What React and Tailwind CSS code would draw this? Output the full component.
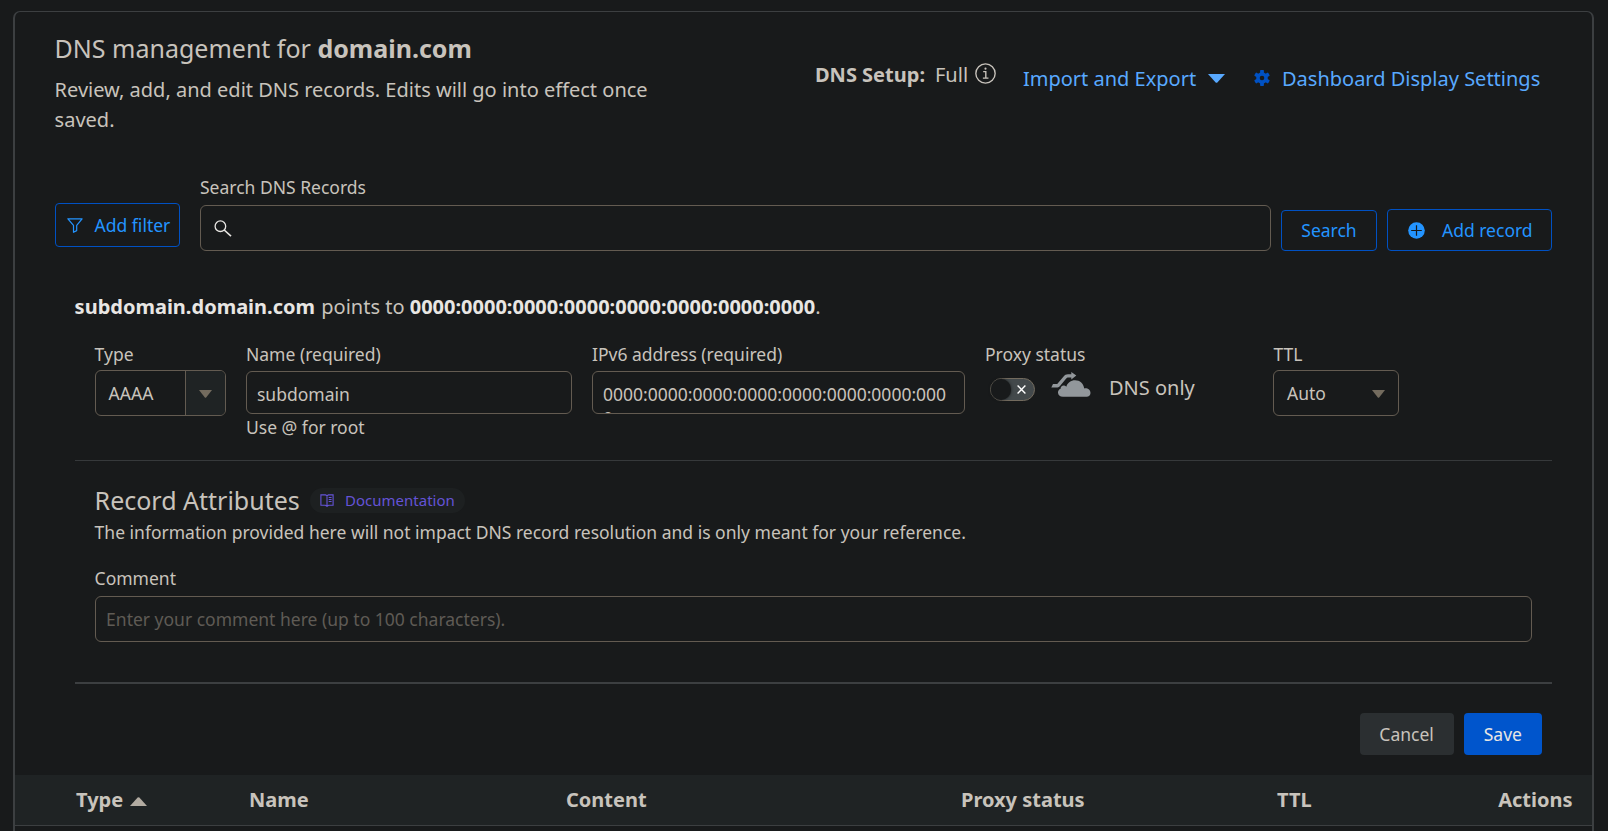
import React from "react";

const Triangle = ({ className, up }) => (
  <svg viewBox="0 0 16 9" preserveAspectRatio="none" className={className} fill="currentColor">
    <path d={up ? "M0 9L7.2 .6Q8 -.2 8.8 .6L16 9Z" : "M0 0H16L8.8 8.4Q8 9.2 7.2 8.4Z"} />
  </svg>
);

const InfoIcon = () => (
  <svg viewBox="0 0 20 20" className="h-[21px] w-[21px]" fill="none" stroke="currentColor" strokeWidth="1.3">
    <circle cx="10" cy="10" r="9.2" />
    <path d="M7.8 8.2H10.3V14.4M7.5 14.4H12.8" />
    <circle cx="10" cy="5.4" r="1" fill="currentColor" stroke="none" />
  </svg>
);

const GearIcon = () => (
  <svg viewBox="0 0 16 16" className="-mt-0.5 h-4 w-4">
    <g fill="#0051c3">
      <rect x="6.1" y="0" width="3.8" height="16" rx=".7" />
      <rect x="6.1" y="0" width="3.8" height="16" rx=".7" transform="rotate(60 8 8)" />
      <rect x="6.1" y="0" width="3.8" height="16" rx=".7" transform="rotate(120 8 8)" />
      <circle cx="8" cy="8" r="5.8" />
    </g>
    <circle cx="8" cy="8" r="2.3" fill="#181a1b" />
  </svg>
);

const FunnelIcon = () => (
  <svg viewBox="0 0 16 15" className="h-[15px] w-4" fill="none" stroke="currentColor" strokeWidth="1.2" strokeLinejoin="round">
    <path d="M.9 .8H15.1L9.7 7.4V12.6L6.5 14.3V7.4Z" />
  </svg>
);

const SearchIcon = () => (
  <svg viewBox="0 0 18 17" className="mt-px h-[17px] w-[18px]" fill="none" stroke="#e8e6e3" strokeWidth="1.3">
    <circle cx="6.4" cy="6.2" r="5.3" />
    <path d="M10.2 10L17 16.2" strokeWidth="1.6" />
  </svg>
);

const PlusIcon = () => (
  <svg viewBox="0 0 17 17" className="h-[17px] w-[17px]">
    <circle cx="8.5" cy="8.5" r="8.3" fill="#2394ff" />
    <path d="M8.5 3.2V13.8M3.2 8.5H13.8" stroke="#181a1b" strokeWidth="1.2" />
  </svg>
);

const BookIcon = () => (
  <svg viewBox="0 0 14 13" className="h-[13px] w-[14px]" fill="none" stroke="currentColor" strokeWidth="1.1">
    <path d="M.9 .9H5.6L7 1.7L8.4 .9H13.100V11.300H8.600L7 12.300L5.400 11.300H.9ZM7 1.700V12" />
    <path d="M8.700 3.500H11.600M8.700 5.500H11.600M8.700 7.500H11.600" />
  </svg>
);

const CloudIcon = () => (
  <svg viewBox="0 0 40 25" className="h-[25px] w-10" fill="#92979b">
    <path d="M12 24.8C8.800 24.800 7 23 7 20.600C7 18.800 8 17.300 9.600 16.800C9.400 14.600 11.300 13.200 13.300 13.600C14.200 13.800 14.900 14.200 15.300 14.700C16.500 10.800 20 8.300 24 8.300C29 8.300 32.700 11.800 33.200 16.400C36.800 15.900 39.500 18 39.500 21C39.500 23.300 37.800 24.800 35.600 24.800Z" />
    <path d="M.3 15.600L2 12H6.200L12.600 4.600C13.800 3.100 15 2.300 17 2.300H20.300V0L25.300 3.600L20.300 7.400V5.500H17.400C16.300 5.500 15.700 5.900 15 6.800L9 13.900C8 15.100 7 15.600 5.400 15.600Z" />
  </svg>
);

const Label = ({ children }) => <div className="text-[17.5px] leading-[25px] whitespace-nowrap">{children}</div>;

export default function App() {
  return (
    <div className="h-[831px] w-[1608px] overflow-hidden bg-[#181a1b] pt-[11px] pl-[13px] font-['Noto_Sans',sans-serif] text-[#c8c3bc]">
      <div className="h-[840px] w-[1581px] rounded-t-[7px] border-x-2 border-t border-[#3c3f41]">
        <div className="pt-[18px] pr-10 pl-[39.6px]">
          <header className="flex items-start">
            <div className="w-[760.4px]">
              <h1 className="text-[25px] leading-9">
                DNS management for <b>domain.com</b>
              </h1>
              <p className="mt-[9px] w-[620px] text-[20px] leading-[30px]">
                Review, add, and edit DNS records. Edits will go into effect once saved.
              </p>
            </div>
            <div className="mt-[30px] flex w-[208px] items-start text-[20px] leading-[30px] whitespace-nowrap">
              <b className="w-[120px]">DNS Setup:</b>
              <span className="w-[40.5px]">Full</span>
              <span className="mt-[2.5px]">
                <InfoIcon />
              </span>
            </div>
            <div className="mt-[34px] flex items-center text-[20px] leading-[30px] whitespace-nowrap text-[#58a9ff]">
              <span className="w-[185px]">Import and Export</span>
              <Triangle className="mr-[29px] -mt-0.5 h-[9px] w-[17px]" />
              <GearIcon />
              <span className="ml-3">Dashboard Display Settings</span>
            </div>
          </header>

          <div className="mt-10 flex items-end text-[17.5px] leading-[25px] whitespace-nowrap">
            <button className="mb-1 flex h-11 w-[125px] items-center rounded-[4px] border-[1.5px] border-[#0051c3] pl-[11px] text-[#2394ff]">
              <FunnelIcon />
              <span className="ml-3">Add filter</span>
            </button>
            <div className="ml-[20.4px] w-[1071px]">
              <Label>Search DNS Records</Label>
              <div className="mt-[5px] flex h-[46px] items-center rounded-[6px] border border-[#635b51] pl-[13px]">
                <SearchIcon />
              </div>
            </div>
            <button className="ml-[10px] h-[41px] w-24 rounded-[4px] border border-[#0051c3] text-[#2394ff]">Search</button>
            <button className="ml-[10px] flex h-[42px] w-[165px] items-center rounded-[4px] border border-[#0051c3] pl-5 text-[#2394ff]">
              <PlusIcon />
              <span className="ml-[17px]">Add record</span>
            </button>
          </div>

          <div className="ml-5">
            <p className="mt-[41px] text-[20px] leading-[30px]">
              <b className="mr-px text-[#e8e6e3]">subdomain.domain.com</b> points to{" "}
              <b className="text-[#e8e6e3]">0000:0000:0000:0000:0000:0000:0000:0000</b>.
            </p>

            <div className="mt-5 flex h-[119px] border-b border-[#36393b] pl-5 text-[17.5px] leading-[25px] whitespace-nowrap">
              <div className="w-[151.4px]">
                <Label>Type</Label>
                <div className="mt-[3px] flex h-[46px] w-[131px] items-center overflow-hidden rounded-[6px] border border-[#635b51]">
                  <span className="flex-1 pl-[13px]">AAAA</span>
                  <span className="flex h-full w-10 items-center justify-center border-l border-[#635b51] bg-[#1f2324]">
                    <Triangle className="mt-px h-2 w-[13px] text-[#736b5e]" />
                  </span>
                </div>
              </div>
              <div className="w-[346px]">
                <Label>Name (required)</Label>
                <div className="mt-1 h-[43px] w-[326px] rounded-[6px] border border-[#635b51] pt-[10px] pl-[10px]">subdomain</div>
                <div className="mt-px">Use @ for root</div>
              </div>
              <div className="w-[393px]">
                <Label>IPv6 address (required)</Label>
                <div className="mt-1 h-[43px] w-[373px] overflow-hidden rounded-[6px] border border-[#635b51] px-[10px] pt-[10px] leading-[24px] break-all whitespace-normal">
                  0000:0000:0000:0000:0000:0000:0000:0000
                </div>
              </div>
              <div className="w-[288.5px]">
                <Label>Proxy status</Label>
                <div className="mt-[3px] flex items-start pl-[5px]">
                  <div className="mt-2 flex h-[23px] w-[45px] items-center justify-between rounded-full border border-[#736b5e] bg-[#43494b] pr-2">
                    <span className="h-[21px] w-5 rounded-full bg-[#181a1b] shadow-[0_0_3px_#181a1b]" />
                    <svg viewBox="0 0 9 9" className="h-[9px] w-[9px]" stroke="#fff" strokeWidth="1.4">
                      <path d="M.6 .6L8.400 8.400M8.400 .6L.6 8.400" />
                    </svg>
                  </div>
                  <span className="mt-0.5 ml-4">
                    <CloudIcon />
                  </span>
                  <span className="mt-[3px] ml-[18px] text-[20px] leading-[30px]">DNS only</span>
                </div>
              </div>
              <div>
                <Label>TTL</Label>
                <div className="mt-[3px] flex h-[46px] w-[126px] items-center justify-between rounded-[6px] border border-[#635b51] pr-[13px] pl-[12.5px]">
                  <span>Auto</span>
                  <Triangle className="mt-px h-2 w-[13px] text-[#736b5e]" />
                </div>
              </div>
            </div>

            <section className="flex h-[223px] flex-col border-b-2 border-[#3c3f41] pt-6 pr-[20px] pl-5">
              <div className="flex items-center">
                <h2 className="w-[215px] text-[25px] leading-[30px] whitespace-nowrap">Record Attributes</h2>
                <a className="flex h-[25px] w-[155px] items-center rounded-full bg-[#1d2021] pl-[10.5px] text-[15px] text-[#6453d6]">
                  <BookIcon />
                  <span className="mt-px ml-[11px]">Documentation</span>
                </a>
              </div>
              <p className="mt-[5px] text-[17.5px] leading-[25px]">
                The information provided here will not impact DNS record resolution and is only meant for your reference.
              </p>
              <div className="mt-[21px]">
                <Label>Comment</Label>
              </div>
              <div className="mt-[5px] flex h-[46px] items-center rounded-[6px] border border-[#635b51] pl-[10.5px] text-[17.5px] text-[#5f5b55]">
                Enter your comment here (up to 100 characters).
              </div>
            </section>

            <div className="mt-[29px] mr-[10px] mb-5 flex justify-end gap-[10px] text-[17.5px]">
              <button className="h-[42px] w-[94px] rounded-[4px] bg-[#2b2f31]">Cancel</button>
              <button className="h-[42px] w-[78.4px] rounded-[4px] bg-[#0055cc] text-[#e8e6e3]">Save</button>
            </div>
          </div>
        </div>

        <div className="grid h-[51px] grid-cols-[173px_317px_395px_316px_1fr_auto] items-center border-b border-[#3c3f41] bg-[#1f2324] pr-[19.5px] pl-[61px] text-[20px] leading-[30px] font-bold whitespace-nowrap">
          <span className="flex items-center gap-[7px]">
            Type
            <Triangle up className="mt-[3px] h-[9px] w-[17px] text-[#b2aba1]" />
          </span>
          <span>Name</span>
          <span>Content</span>
          <span>Proxy status</span>
          <span>TTL</span>
          <span>Actions</span>
        </div>
      </div>
    </div>
  );
}
